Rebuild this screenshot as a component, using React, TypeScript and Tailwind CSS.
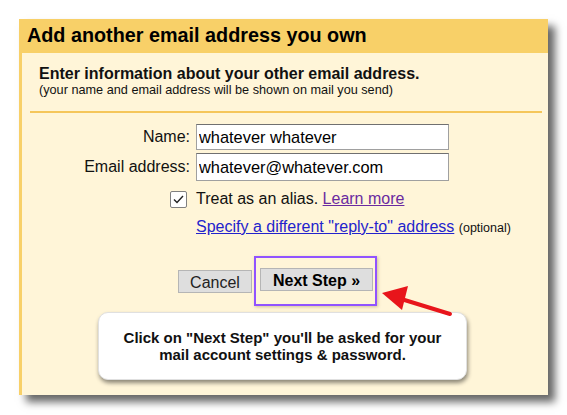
import React from 'react';

function Arrow() {
  return (
    <svg
      className="absolute left-[376px] top-[282px]"
      width="80"
      height="40"
      viewBox="0 0 80 40"
    >
      <line x1="74" y1="32" x2="22" y2="16" stroke="#e8151b" strokeWidth="4" strokeLinecap="round" />
      <polygon points="6,11 32,4 26,28" fill="#e8151b" />
    </svg>
  );
}

export default function App() {
  return (
    <div className="w-[567px] h-[415px] bg-white pt-[19px] pl-[19px] font-['Liberation_Sans',Arial,sans-serif] text-[#111] relative">
      <div className="w-[529px] h-[376px] flex flex-col shadow-[7px_7px_8px_rgba(0,0,0,0.6)]">
        {/* header */}
        <div className="h-[34px] bg-[#f8d068] px-[8px] flex items-center">
          <h1 className="text-[19.8px] font-bold text-black">Add another email address you own</h1>
        </div>

        {/* body */}
        <div className="flex-1 bg-[#fff5d8] border-l-[3px] border-[#f8d068] flex flex-col">
          <div className="pl-[17px] pt-[12px]">
            <h2 className="text-[16px] leading-[18px] font-bold">Enter information about your other email address.</h2>
            <p className="text-[12.7px] leading-[15px]">(your name and email address will be shown on mail you send)</p>
          </div>
          <div className="ml-[8px] mr-[6px] mt-[13px] h-[2px] bg-[#f5c65a]" />

          <div className="grid grid-cols-[168px_253px] gap-x-[6px] items-center mt-[11px] text-[16px] leading-[18px]">
            <label className="text-right">Name:</label>
            <input
              defaultValue="whatever whatever"
              className="h-[26px] bg-white border border-[#a0a0a0] border-t-[#707070] px-[2px] text-[16.4px] text-black outline-none"
            />
            <label className="text-right mt-[3px]">Email address:</label>
            <input
              defaultValue="whatever@whatever.com"
              className="h-[28px] mt-[3px] bg-white border border-[#a0a0a0] border-t-[#707070] px-[2px] text-[16.4px] text-black outline-none"
            />
            <div className="flex justify-end pr-[3px] mt-[9px]">
              <div className="w-[17px] h-[17px] bg-white border border-[#808080] rounded-[2px] flex items-center justify-center">
                <svg width="13" height="13" viewBox="0 0 13 13">
                  <path d="M2 6.5 L5 9.5 L11 3" fill="none" stroke="#222" strokeWidth="1.4" />
                </svg>
              </div>
            </div>
            <div className="mt-[9px] whitespace-nowrap">
              Treat as an alias.{' '}
              <a className="text-[#6a2aa0] underline">Learn more</a>
            </div>
            <div />
            <div className="mt-[10px] whitespace-nowrap">
              <a className="text-[#2323cc] underline">Specify a different "reply-to" address</a>{' '}
              <span className="text-[12.5px]">(optional)</span>
            </div>
          </div>

          <div className="flex items-center ml-[156px] mt-[19px]">
            <button className="w-[74px] h-[23px] bg-[#dedede] border border-[#b5b5b5] text-[16px] text-[#222]">
              Cancel
            </button>
            <div className="ml-[2px] border-2 border-[#9153ff] pt-[10px] pb-[11px] pl-[4px] pr-[2px] shadow-[1px_1px_3px_rgba(120,100,40,0.35)]">
              <button className="w-[113px] h-[23px] bg-[#dedede] border border-[#b5b5b5] text-[16px] font-bold text-black">
                Next Step »
              </button>
            </div>
          </div>

          <div className="ml-[76px] mt-[6px] w-[369px] h-[68px] bg-white rounded-[10px] border border-[#e0e0e0] shadow-[1px_3px_4px_rgba(0,0,0,0.45)] flex flex-col items-center justify-center text-[15px] leading-[17px] font-bold text-[#111]">
            <p>Click on "Next Step" you'll be asked for your</p>
            <p>mail account settings &amp; password.</p>
          </div>
        </div>
      </div>
      <Arrow />
    </div>
  );
}
